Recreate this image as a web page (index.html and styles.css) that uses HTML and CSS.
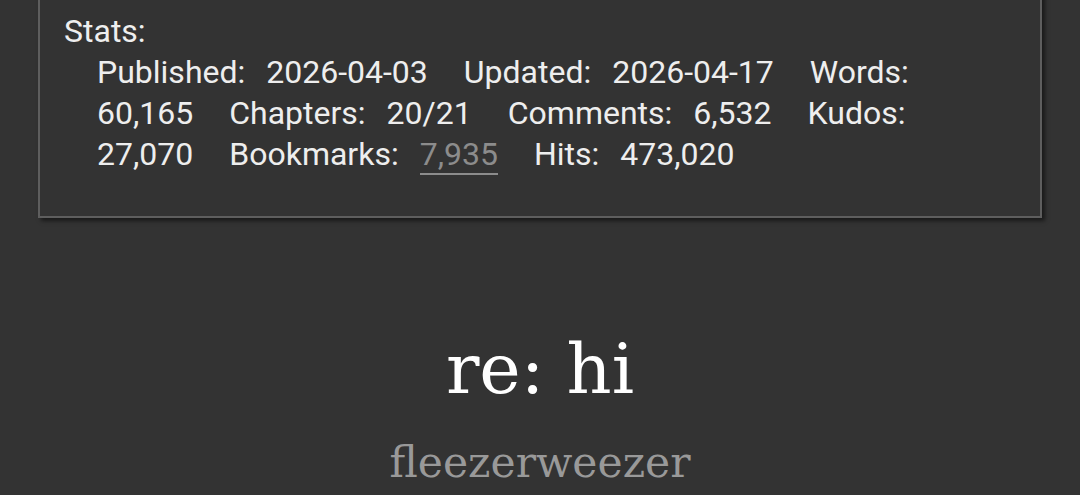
FILE: index.html
```html
<!DOCTYPE html>
<html lang="en">
<head>
  <meta charset="UTF-8">
  <title>re: hi</title>
  <link rel="stylesheet" href="styles.css">
</head>
<body>
  <div class="wrapper">
    <dl class="meta">
      <dt class="stats-title">Stats:</dt>
      <dd class="stats-list">
        <dl class="stats">
          <dt>Published:</dt><dd>2026-04-03</dd>
          <dt>Updated:</dt><dd>2026-04-17</dd>
          <dt>Words:</dt><dd>60,165</dd>
          <dt>Chapters:</dt><dd>20/21</dd>
          <dt>Comments:</dt><dd>6,532</dd>
          <dt>Kudos:</dt><dd>27,070</dd>
          <dt>Bookmarks:</dt><dd><a href="#">7,935</a></dd>
          <dt>Hits:</dt><dd>473,020</dd>
        </dl>
      </dd>
    </dl>
  </div>

  <div class="preface">
    <h2 class="title">re: hi</h2>
    <h3 class="byline"><a href="#">fleezerweezer</a></h3>
  </div>
</body>
</html>
```

FILE: styles.css
```css
body {
  margin: 0;
  background: #333;
  color: #eee;
  font-family: Roboto, sans-serif;
  overflow: hidden;
}

.wrapper {
  margin: -40px 38px 0 38px;
  padding: 49px 24px 41px 24px;
  border: 2px solid #5e5e5e;
  background: #333;
  box-shadow: 3px 3px 4px rgba(0, 0, 0, 0.5);
}

.meta {
  margin: 0;
  font-size: 32px;
  line-height: 41px;
}

.stats-title {
  display: block;
}

.stats-list {
  margin: 0 0 0 33px;
}

.stats {
  display: flex;
  flex-wrap: wrap;
  margin: 0;
  padding-right: 40px;
}

.stats dt {
  margin-right: 21px;
}

.stats dd {
  margin: 0 36px 0 0;
}

.stats a {
  color: #8c8c8c;
  text-decoration: none;
  border-bottom: 2px solid #8c8c8c;
  line-height: 1;
}

.preface {
  text-align: center;
  margin-top: 109px;
  font-family: "DejaVu Serif", serif;
}

.title {
  margin: 0;
  font-size: 70px;
  font-weight: normal;
  color: #fff;
  line-height: 84px;
}

.byline {
  margin: 0;
  font-size: 42.5px;
  font-weight: normal;
  line-height: 104px;
}

.byline a {
  color: #999;
  text-decoration: none;
}
```
